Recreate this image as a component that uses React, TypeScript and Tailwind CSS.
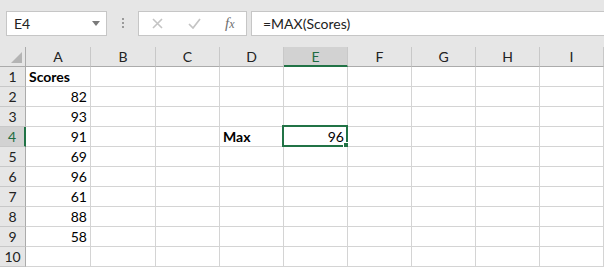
import React from 'react';

const cols = ['A', 'B', 'C', 'D', 'E', 'F', 'G', 'H', 'I'];
const scores = [82, 93, 91, 69, 96, 61, 88, 58];

function cellValue(row: number, col: string) {
  if (col === 'A') {
    if (row === 1) return { text: 'Scores', bold: true, right: false };
    if (row >= 2 && row <= 9) return { text: String(scores[row - 2]), bold: false, right: true };
  }
  if (row === 4 && col === 'D') return { text: 'Max', bold: true, right: false };
  if (row === 4 && col === 'E') return { text: '96', bold: false, right: true };
  return null;
}

export default function App() {
  return (
    <div className="w-[604px] h-[267px] overflow-hidden bg-[#e6e6e6] text-black" style={{ fontFamily: 'Lato, "Liberation Sans", sans-serif' }}>
      {/* Formula bar */}
      <div className="flex items-center h-[47px] pb-[1px]">
        <div className="ml-[6px] w-[101px] h-[25px] bg-white border border-[#c6c6c6] flex items-center justify-between pl-[7px] pr-[6px]">
          <span className="text-[14px] text-[#222]">E4</span>
          <svg width="8" height="5" viewBox="0 0 8 5"><path d="M0 0h8L4 5z" fill="#7a7a7a" /></svg>
        </div>
        <div className="w-[31px] flex flex-col items-center gap-[2px]">
          <div className="w-[2px] h-[2px] bg-[#9a9a9a]" />
          <div className="w-[2px] h-[2px] bg-[#9a9a9a]" />
          <div className="w-[2px] h-[2px] bg-[#9a9a9a]" />
        </div>
        <div className="w-[109px] h-[25px] bg-white border border-[#c6c6c6] flex items-center">
          <svg className="ml-[13px]" width="11" height="11" viewBox="0 0 11 11"><path d="M1 1l9 9M10 1l-9 9" stroke="#c4c4c4" strokeWidth="1.6" /></svg>
          <svg className="ml-[25px]" width="13" height="11" viewBox="0 0 13 11"><path d="M1 6l4 4 7-9" stroke="#c4c4c4" strokeWidth="1.7" fill="none" /></svg>
          <span className="ml-[24px] text-[15px] italic text-[#6e6e6e]" style={{ fontFamily: '"Liberation Serif", serif' }}>
            f<span className="text-[12px]">x</span>
          </span>
        </div>
        <div className="ml-[4px] flex-1 h-[25px] bg-white border border-r-0 border-[#c6c6c6] flex items-center pl-[11px]">
          <span className="text-[14px] text-[#222]">=MAX(Scores)</span>
        </div>
      </div>

      {/* Sheet grid */}
      <div className="grid grid-cols-[26px_65px_65px_64px_64px_64px_64px_64px_64px_64px] auto-rows-[20px]">
        {/* header row */}
        <div className="border-r border-b border-[#ababab] relative">
          <svg className="absolute right-[3px] bottom-[3px]" width="11" height="11" viewBox="0 0 11 11"><path d="M11 0V11H0z" fill="#b4b4b4" /></svg>
        </div>
        {cols.map((c) => (
          <div
            key={c}
            className={`flex items-center justify-center text-[14px] border-r border-[#c8c8c8] ${
              c === 'E' ? 'bg-[#d2d2d2] text-[#1e6b41] border-b-2 border-b-[#217346]' : 'text-[#222] border-b border-b-[#ababab]'
            }`}
          >
            {c}
          </div>
        ))}

        {Array.from({ length: 10 }, (_, i) => i + 1).map((row) => (
          <React.Fragment key={row}>
            <div
              className={`flex items-center justify-center text-[14px] border-b border-[#c8c8c8] ${
                row === 4 ? 'bg-[#d2d2d2] text-[#1e6b41] border-r-2 border-r-[#217346]' : 'text-[#222] border-r border-r-[#ababab]'
              }`}
            >
              {row}
            </div>
            {cols.map((c) => {
              const v = cellValue(row, c);
              const selected = row === 4 && c === 'E';
              return (
                <div
                  key={c}
                  className={`relative bg-white border-r border-b border-[#d4d4d4] flex items-center text-[14px] px-[3px] ${
                    v?.right ? 'justify-end' : 'justify-start'
                  } ${v?.bold ? 'font-bold' : ''}`}
                >
                  {v?.text}
                  {selected && (
                    <>
                      <div className="absolute -left-[2px] -top-[2px] -right-[1px] -bottom-[1px] border-2 border-[#217346]" />
                      <div className="absolute -right-[3px] -bottom-[3px] w-[7px] h-[7px] bg-[#217346] border border-white" />
                    </>
                  )}
                </div>
              );
            })}
          </React.Fragment>
        ))}
      </div>
    </div>
  );
}
